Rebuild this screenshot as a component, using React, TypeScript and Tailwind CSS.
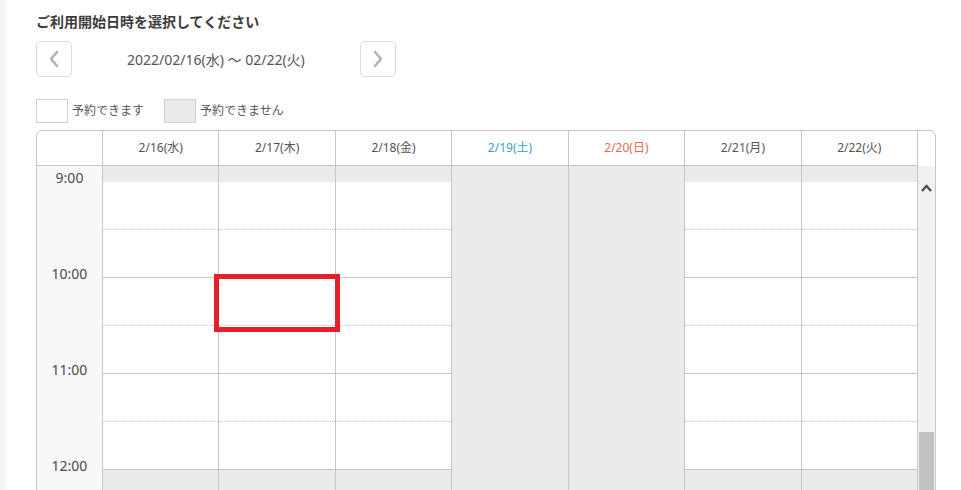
const days = [
  { label: "2/16(水)", color: "text-[#555]", off: false },
  { label: "2/17(木)", color: "text-[#555]", off: false },
  { label: "2/18(金)", color: "text-[#555]", off: false },
  { label: "2/19(土)", color: "text-[#3a9fd2]", off: true },
  { label: "2/20(日)", color: "text-[#e5694d]", off: true },
  { label: "2/21(月)", color: "text-[#555]", off: false },
  { label: "2/22(火)", color: "text-[#555]", off: false },
];

const hours = ["9:00", "10:00", "11:00", "12:00"];

const Chevron = ({ dir }: { dir: "left" | "right" }) => (
  <svg width="12" height="18" viewBox="0 0 12 18" fill="none">
    <path
      d={dir === "left" ? "M9 2 L3 9 L9 16" : "M3 2 L9 9 L3 16"}
      stroke="#b3b3b3"
      strokeWidth="2.6"
      strokeLinecap="round"
      strokeLinejoin="round"
    />
  </svg>
);

const DayColumn = ({ off }: { off: boolean }) => {
  if (off) {
    return <div className="h-full border-r border-[#c6c6c6] bg-[#ebebeb]" />;
  }
  return (
    <div className="flex h-full flex-col border-r border-[#c6c6c6]">
      <div className="h-[16px] bg-[#ebebeb]" />
      {[0, 1, 2, 3, 4, 5].map((i) => (
        <div
          key={i}
          className={
            i % 2 === 0
              ? "h-[48px] border-b border-dotted border-[#c8c8c8] bg-white"
              : "h-[48px] border-b border-[#c6c6c6] bg-white"
          }
        />
      ))}
      <div className="flex-1 bg-[#ebebeb]" />
    </div>
  );
};

const App = () => {
  return (
    <div
      className="flex h-[490px] w-[961px] overflow-hidden bg-white"
      style={{ fontFamily: '"Noto Sans", "Noto Sans CJK JP", sans-serif' }}
    >
      <div className="w-[6px] shrink-0 bg-[#f3f8f5]" />
      <div className="flex-1 pl-[30px] pt-[12px]">
        <h2 className="text-[14px] font-bold leading-[20px] text-[#3c3c3c]">
          ご利用開始日時を選択してください
        </h2>

        <div className="mt-[9px] flex items-center">
          <button className="flex h-[36px] w-[36px] items-center justify-center rounded-[5px] border border-[#dcdcdc] bg-white">
            <Chevron dir="left" />
          </button>
          <span className="ml-[55px] w-[233px] text-[14px] text-[#555]">
            2022/02/16(水) 〜 02/22(火)
          </span>
          <button className="flex h-[36px] w-[36px] items-center justify-center rounded-[5px] border border-[#dcdcdc] bg-white">
            <Chevron dir="right" />
          </button>
        </div>

        <div className="mt-[22px] flex items-center text-[12px] text-[#555]">
          <div className="h-[24px] w-[32px] border border-[#cfcfcf] bg-white" />
          <span className="ml-[4px]">予約できます</span>
          <div className="ml-[20px] h-[24px] w-[32px] border border-[#cfcfcf] bg-[#ebebeb]" />
          <span className="ml-[4px]">予約できません</span>
        </div>

        <div className="mt-[7px] w-[900px] rounded-t-[6px] border border-[#c6c6c6]">
          <div className="grid grid-cols-[66px_repeat(7,1fr)_17px]">
            <div className="h-[35px] border-b border-r border-[#c6c6c6]" />
            {days.map((d) => (
              <div
                key={d.label}
                className={`flex h-[35px] items-center justify-center border-b border-r border-[#c6c6c6] text-[12px] ${d.color}`}
              >
                {d.label}
              </div>
            ))}
            <div />
          </div>

          <div className="relative grid h-[340px] grid-cols-[66px_repeat(7,1fr)_17px]">
            <div className="flex h-full flex-col border-r border-[#c6c6c6] bg-[#f8f8f8]">
              {hours.map((h) => (
                <div key={h} className="h-[96px] shrink-0 pt-[3px] text-center text-[14px] leading-[18px] text-[#4a4a4a]">
                  {h}
                </div>
              ))}
            </div>
            {days.map((d) => (
              <DayColumn key={d.label} off={d.off} />
            ))}
            <div className="flex h-full flex-col items-center bg-[#f1f1f1]">
              <svg className="mt-[18px]" width="11" height="8" viewBox="0 0 11 8">
                <path d="M1 7 L5.5 2 L10 7" stroke="#505050" strokeWidth="2.4" fill="none" />
              </svg>
              <div className="mt-[240px] w-[15px] flex-1 bg-[#c1c1c1]" />
            </div>

            <div className="absolute left-[177px] top-[108px] h-[58px] w-[126px] border-[5px] border-[#e3202b]" />
          </div>
        </div>
      </div>
    </div>
  );
};

export default App;
